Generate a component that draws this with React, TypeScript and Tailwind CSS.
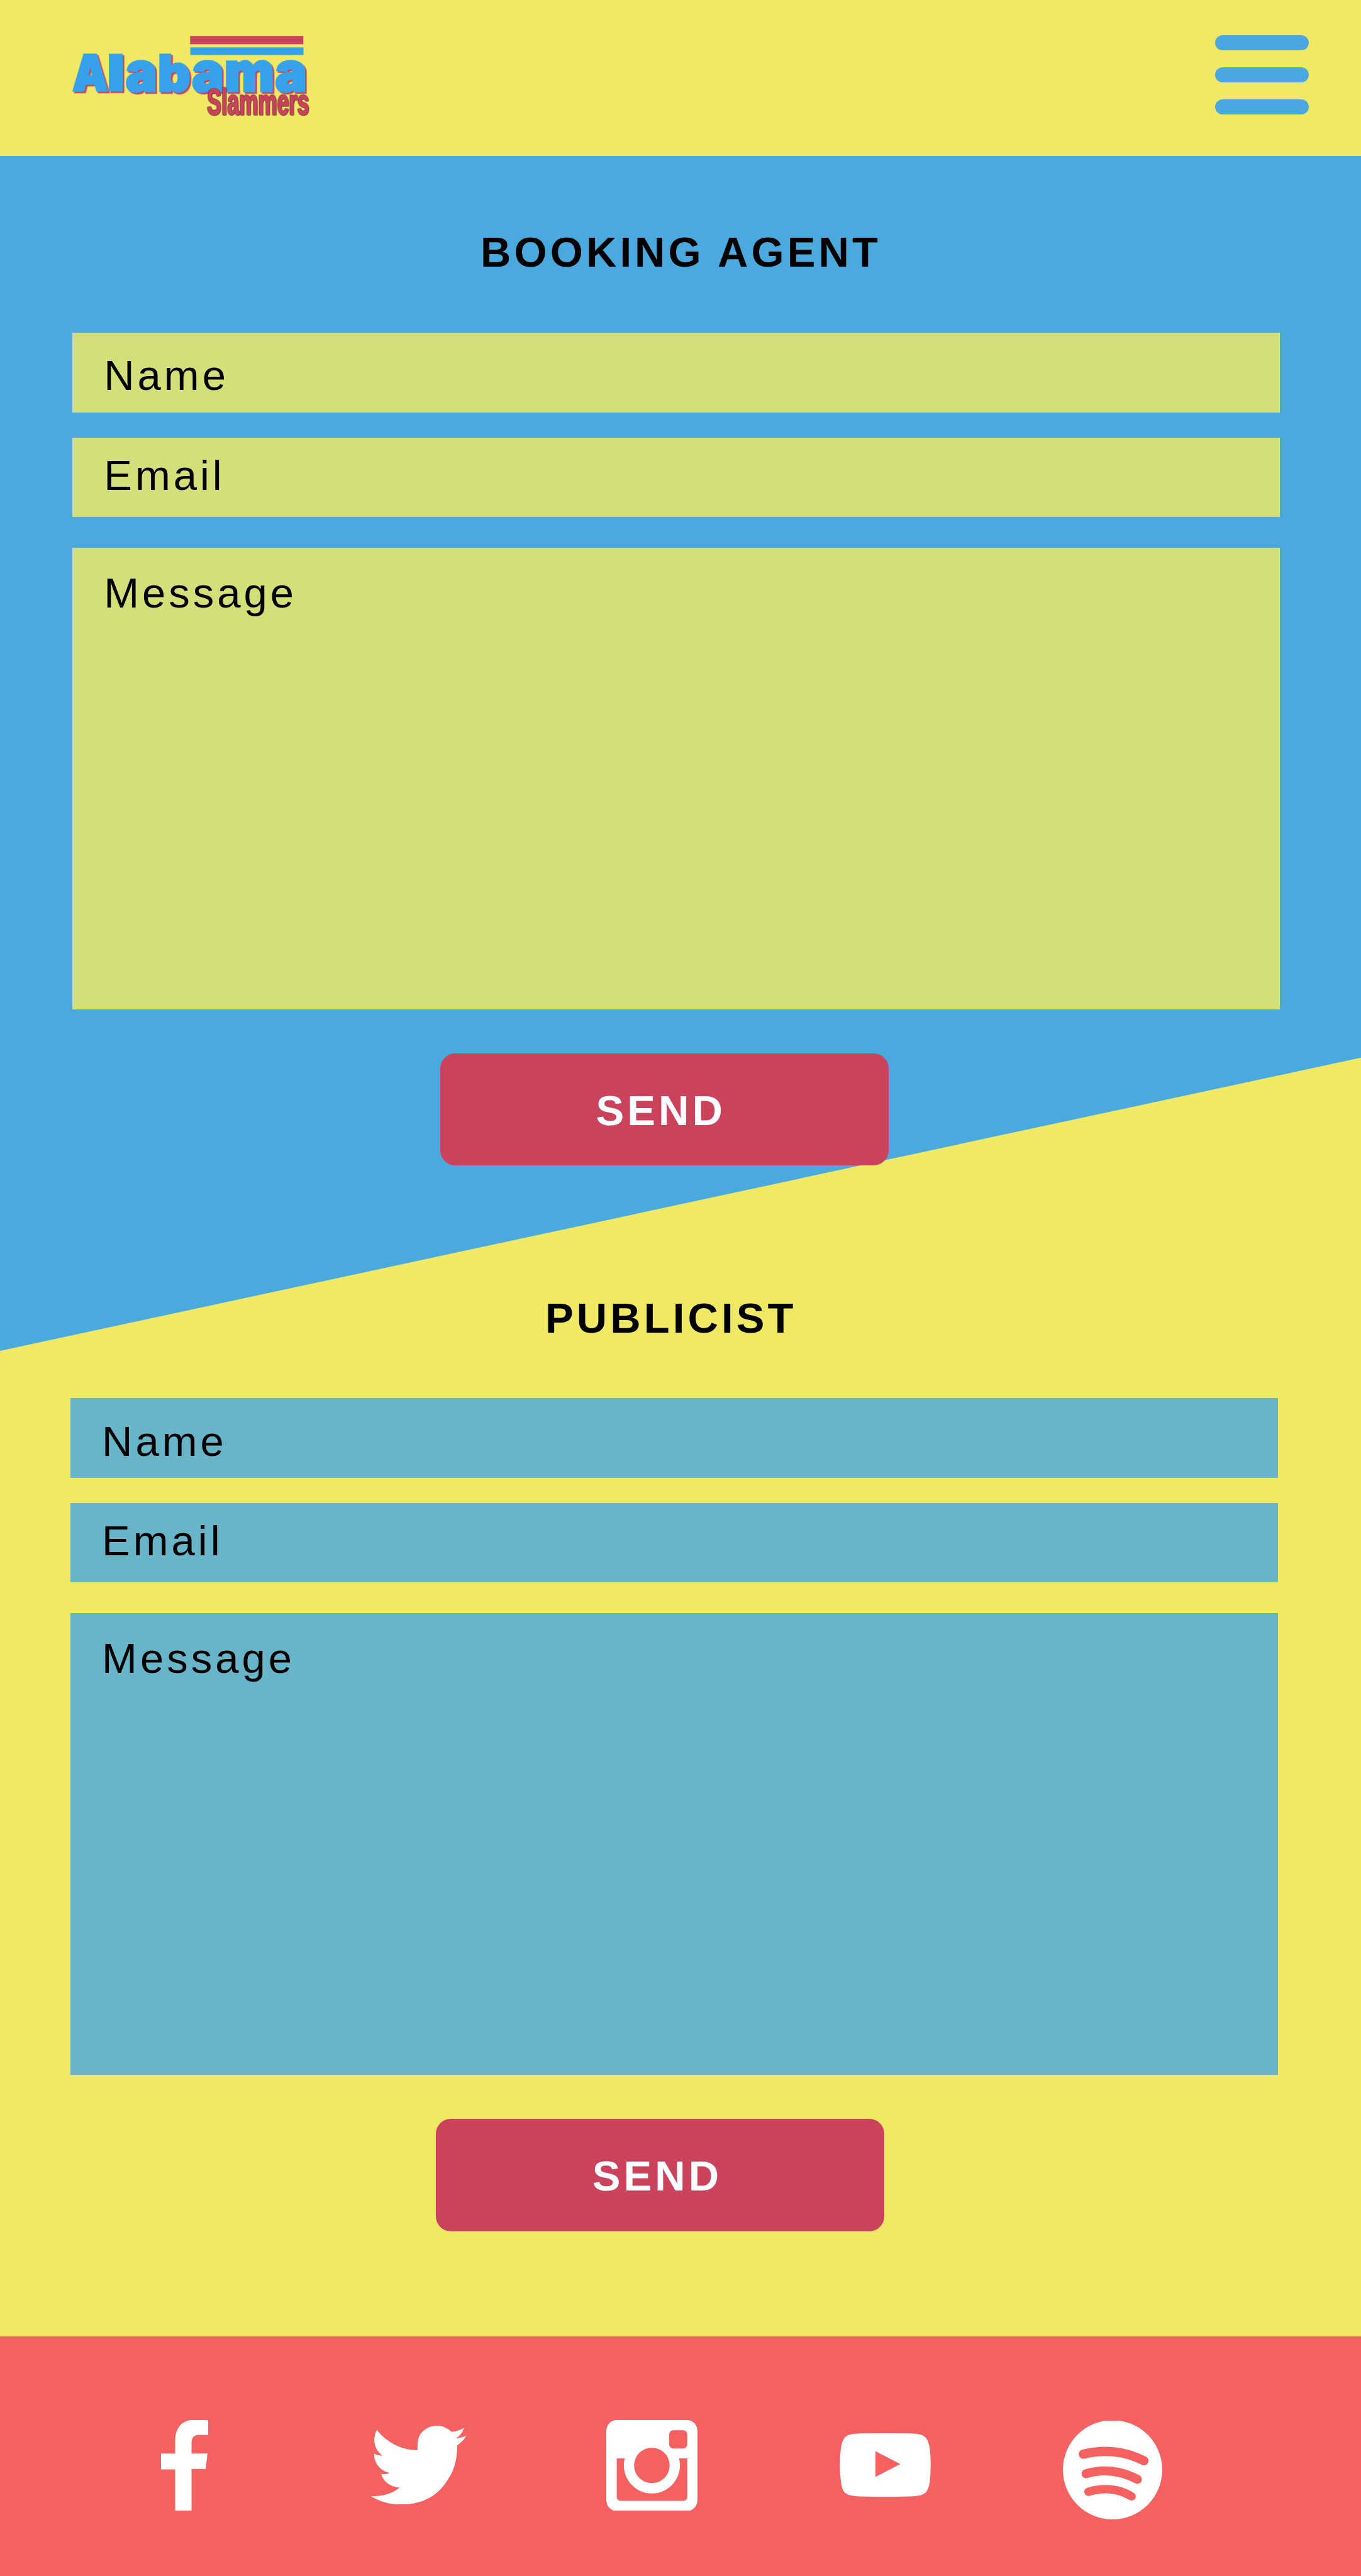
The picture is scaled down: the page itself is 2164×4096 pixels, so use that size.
import React from "react";

type Box = { x1: number; y1: number; x2: number; y2: number };

const measure = (text: string, font: string) => {
  const ctx = document.createElement("canvas").getContext("2d")!;
  ctx.font = font;
  const m = ctx.measureText(text);
  return {
    left: -m.actualBoundingBoxLeft,
    right: m.actualBoundingBoxRight,
    top: -m.actualBoundingBoxAscent,
    bottom: m.actualBoundingBoxDescent,
  };
};

/* Text stretched so that its ink, including the outline, fills a box. */
function FitText({
  text,
  box,
  family,
  weight,
  color,
  strokeWidth,
}: {
  text: string;
  box: Box;
  family: string;
  weight: number;
  color: string;
  strokeWidth: number;
}) {
  const ink = measure(text, `${weight} 200px "${family}"`);
  const h = strokeWidth / 2;
  const sx = (box.x2 - box.x1 - strokeWidth) / (ink.right - ink.left);
  const sy = (box.y2 - box.y1 - strokeWidth) / (ink.bottom - ink.top);
  const tx = box.x1 + h - ink.left * sx;
  const ty = box.y1 + h - ink.top * sy;
  return (
    <text
      transform={`translate(${tx} ${ty}) scale(${sx} ${sy})`}
      fontFamily={`"${family}", sans-serif`}
      fontWeight={weight}
      fontSize={200}
      fill={color}
      stroke={color}
      strokeWidth={strokeWidth / Math.sqrt(sx * sy)}
      strokeLinejoin="miter"
      strokeMiterlimit={3}
    >
      {text}
    </text>
  );
}

const letters: { ch: string; box: Box }[] = [
  { ch: "A", box: { x1: 55, y1: 186, x2: 259, y2: 405 } },
  { ch: "l", box: { x1: 261, y1: 186, x2: 342, y2: 405 } },
  { ch: "a", box: { x1: 358, y1: 221, x2: 529, y2: 410 } },
  { ch: "b", box: { x1: 549, y1: 186, x2: 726, y2: 410 } },
  { ch: "a", box: { x1: 737, y1: 221, x2: 910, y2: 410 } },
  { ch: "m", box: { x1: 929, y1: 223, x2: 1198, y2: 408 } },
  { ch: "a", box: { x1: 1211, y1: 224, x2: 1383, y2: 412 } },
];

function Logo() {
  return (
    <svg viewBox="0 0 1500 600" className="mt-[33.4px] ml-[100.3px] h-[167.2px] w-[418px]" aria-label="Alabama Slammers">
      <rect x="726" y="87" width="646" height="47" fill="#cb425d" />
      <rect x="727" y="152" width="646" height="44" fill="#37a2ec" />
      <g className="[filter:drop-shadow(9px_9px_0_#cb425d)]">
        {letters.map((l, i) => (
          <FitText key={i} text={l.ch} box={l.box} family="Inter" weight={900} color="#37a2ec" strokeWidth={12} />
        ))}
      </g>
      <g className="[filter:drop-shadow(2px_2px_0_#4a2030)_drop-shadow(-2px_-2px_0_#7a2c40)]">
        <FitText text="Slammers" box={{ x1: 824, y1: 383, x2: 1403, y2: 537 }} family="Liberation Sans" weight={700} color="#cb425d" strokeWidth={4} />
      </g>
    </svg>
  );
}

function MenuButton() {
  return (
    <button className="mt-[56px] mr-[83.5px] flex h-[126px] w-[149px] flex-col justify-between" aria-label="Menu">
      <span className="h-6 w-full rounded-full bg-[#48a8df]" />
      <span className="h-6 w-full rounded-full bg-[#48a8df]" />
      <span className="h-6 w-full rounded-full bg-[#48a8df]" />
    </button>
  );
}

function ContactForm({
  title,
  titleClass,
  fieldClass,
  formClass,
  buttonClass,
}: {
  title: string;
  titleClass: string;
  fieldClass: string;
  formClass: string;
  buttonClass: string;
}) {
  return (
    <>
      <h2 className={`pt-[120.2px] text-[67px] leading-[66px] font-bold tracking-[5.1px] whitespace-nowrap ${titleClass}`}>{title}</h2>
      <form className={`mt-[94.6px] flex w-[1920px] flex-col text-[67px] leading-[66px] tracking-[5px] ${formClass}`}>
        <label className={`h-[126.7px] pt-[35.3px] pl-[49.8px] ${fieldClass}`}>Name</label>
        <label className={`mt-[39.9px] h-[126.4px] pt-[27px] pl-[49.8px] ${fieldClass}`}>Email</label>
        <label className={`mt-[48.7px] h-[734.1px] pt-[39.3px] pl-[49.8px] ${fieldClass}`}>Message</label>
      </form>
      <button
        className={`mt-[69.8px] flex h-[178.8px] w-[712.7px] items-start rounded-[24px] bg-[#cb425d] pt-[58px] text-[67px] leading-[66px] font-bold tracking-[5.1px] text-white ${buttonClass}`}
      >
        SEND
      </button>
    </>
  );
}

function Footer() {
  return (
    <footer className="flex h-[381px] items-start bg-[#f46160]">
      <svg viewBox="106 129 208 518" preserveAspectRatio="none" className="mt-[132.6px] ml-[255.8px] h-[144.3px] w-[75.4px] shrink-0" fill="#fff">
        <path d="M168 647V411H106V320H168V245C170 172 198 133 240 129Q275 128 308 130Q314 131 314 137V214H272C247 214 240 235 240 262V320H310L302 408H240V647Z" />
      </svg>
      <svg viewBox="1028 163 418 450" preserveAspectRatio="none" className="mt-[142.1px] ml-[258.8px] h-[125.4px] w-[151.5px] shrink-0" fill="#fff">
        <path d="M1053 186C1096 256 1160 303 1232 302C1231 250 1234 222 1254 196C1274 172 1295 163 1318 163C1347 163 1362 180 1383 198Q1408 196 1436 176Q1427 214 1400 236Q1424 233 1446 221Q1432 250 1406 276C1406 350 1394 415 1368 464C1325 562 1255 613 1160 613C1110 613 1066 597 1028 566C1078 566 1122 552 1153 516C1112 512 1082 482 1073 439Q1096 442 1109 433C1065 420 1040 370 1041 323Q1060 335 1078 335C1040 295 1033 240 1053 186Z" />
      </svg>
      <svg viewBox="76 129 400 519" preserveAspectRatio="none" className="mt-[132.6px] ml-[222.2px] h-[144.6px] w-[145px] shrink-0">
        <rect x="76" y="129" width="400" height="519" rx="46" ry="62" fill="#fff" />
        <rect x="352" y="187" width="79" height="104" rx="18" ry="23" fill="#f46160" />
        <path d="M122 348H157A123 160 0 1 0 395 348H431V570Q430 588 415 590H138Q123 588 122 570Z" fill="#f46160" />
        <ellipse cx="276" cy="388" rx="78" ry="101" fill="#f46160" />
      </svg>
      <svg viewBox="1100 207 400 363" preserveAspectRatio="none" className="mt-[154.4px] ml-[226.2px] h-[101.1px] w-[145px] shrink-0">
        <path
          d="M1190 208Q1300 206 1410 208C1472 211 1485 225 1495 290Q1504 383 1495 490C1485 552 1472 564 1410 568Q1300 572 1190 568C1128 564 1114 552 1106 490Q1096 383 1106 290C1114 225 1128 211 1190 208Z"
          fill="#fff"
        />
        <path d="M1257 309L1366 383L1257 457Z" fill="#f46160" />
      </svg>
      <svg viewBox="126 135 567 561" preserveAspectRatio="none" className="mt-[134.3px] ml-[210.2px] h-[156.3px] w-[158px] shrink-0">
        <circle cx="409.5" cy="415.5" r="283.5" fill="#fff" />
        <g fill="none" stroke="#f46160" strokeLinecap="round">
          <path strokeWidth="53" d="M243 326C360 298 480 308 588 364" />
          <path strokeWidth="51" d="M258 438C360 408 460 422 551 470" />
          <path strokeWidth="48" d="M272 541C350 516 440 520 518 567" />
        </g>
      </svg>
    </footer>
  );
}

export default function App() {
  return (
    <div className="relative flex h-[4096px] w-[2164px] flex-col overflow-hidden bg-[#f0e965] font-['Liberation_Sans',Arial,sans-serif] text-black">
      <div className="absolute inset-x-0 top-[248px] h-[1900px] bg-[#4baadd] [clip-path:polygon(0_0,100%_0,100%_1433.7px,0_100%)]" />
      <header className="relative flex h-[248.3px] shrink-0 items-start justify-between">
        <Logo />
        <MenuButton />
      </header>
      <section className="relative h-[1694.4px] shrink-0">
        <ContactForm title="BOOKING AGENT" titleClass="pl-[764px]" fieldClass="bg-[#d4df79]" formClass="ml-[115.4px]" buttonClass="ml-[700px] pl-[247.5px]" />
      </section>
      <section className="relative h-[1772.3px] shrink-0">
        <ContactForm title="PUBLICIST" titleClass="pl-[867px]" fieldClass="bg-[#68b4c9]" formClass="ml-[112.3px]" buttonClass="ml-[693px] pl-[248.8px]" />
      </section>
      <Footer />
    </div>
  );
}
